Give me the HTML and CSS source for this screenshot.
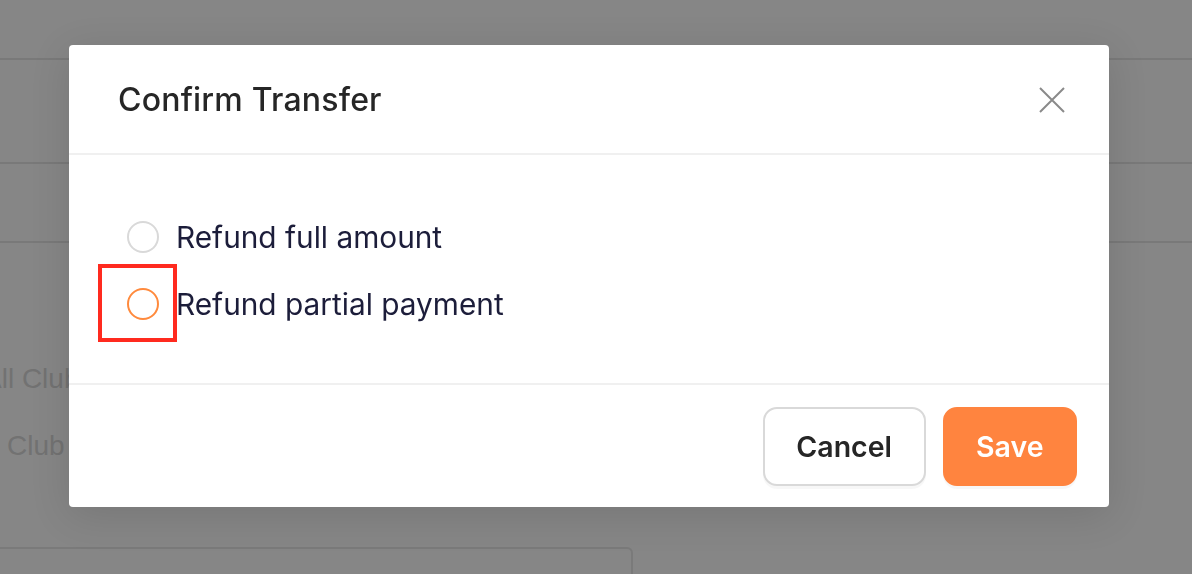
FILE: index.html
```html
<!DOCTYPE html>
<html lang="en">
<head>
    <meta charset="UTF-8">
    <meta name="viewport" content="width=device-width, initial-scale=1.0">
    <title>Confirm Transfer</title>
    <link rel="stylesheet" href="styles.css">
</head>
<body>
    <div class="page">
        <div class="page-row first"></div>
        <div class="page-row second"></div>
        <div class="page-row third"></div>
        <div class="club-list">
            <div class="club-item all">All Clubs</div>
            <div class="club-item mine">My Club</div>
        </div>
        <div class="page-box"></div>
    </div>

    <div class="overlay">
        <div class="modal">
            <div class="modal-header">
                <h2 class="modal-title">Confirm Transfer</h2>
                <button class="close-btn" aria-label="Close">
                    <svg width="26" height="26" viewBox="0 0 26 26">
                        <path d="M1 1 L25 25 M25 1 L1 25" stroke="#8a8a8a" stroke-width="2" fill="none"/>
                    </svg>
                </button>
            </div>
            <div class="modal-body">
                <label class="option">
                    <span class="radio"></span>
                    <span>Refund full amount</span>
                </label>
                <label class="option">
                    <span class="radio active"></span>
                    <span>Refund partial payment</span>
                </label>
                <div class="highlight"></div>
            </div>
            <div class="modal-footer">
                <button class="btn btn-cancel">Cancel</button>
                <button class="btn btn-save">Save</button>
            </div>
        </div>
    </div>
</body>
</html>
```

FILE: styles.css
```css
body {
    margin: 0;
    font-family: Inter, "Noto Sans", sans-serif;
    background-color: #868686;
    overflow: hidden;
}
.page {
    height: 574px;
    overflow: hidden;
}
.page-row {
    border-bottom: 2px solid #797979;
}
.page-row.first {
    height: 58px;
}
.page-row.second {
    height: 102px;
}
.page-row.third {
    height: 77px;
}
.club-list {
    padding-top: 120px;
    font-family: "Liberation Sans", Arial, sans-serif;
    font-size: 28px;
    color: #727272;
    white-space: nowrap;
}
.club-item {
    height: 67px;
}
.club-item.all {
    margin-left: -17px;
}
.club-item.mine {
    margin-left: -38px;
}
.page-box {
    margin-top: 50px;
    margin-left: -20px;
    width: 649px;
    height: 60px;
    border: 2px solid #7a7a7a;
    border-radius: 6px;
}

/* modal por cima da pagina */
.overlay {
    position: fixed;
    top: 0;
    left: 0;
    right: 0;
    bottom: 0;
    padding: 45px 0 0 69px;
}
.modal {
    width: 1040px;
    height: 462px;
    background-color: #fff;
    border-radius: 4px;
    box-shadow: 0 8px 40px rgba(0, 0, 0, 0.12);
    display: flex;
    flex-direction: column;
}
.modal-header {
    height: 108px;
    border-bottom: 2px solid #f0f0f0;
    display: flex;
    align-items: center;
    justify-content: space-between;
    padding: 0 44px 0 49px;
}
.modal-title {
    margin: 0;
    font-size: 32px;
    font-weight: 500;
    color: #262626;
    letter-spacing: 0.2px;
}
.close-btn {
    background: none;
    border: none;
    padding: 0;
    width: 26px;
    height: 26px;
    cursor: pointer;
    margin-top: 2px;
}
.modal-body {
    position: relative;
    height: 230px;
    border-bottom: 2px solid #f0f0f0;
    padding: 64px 0 0 58px;
    box-sizing: border-box;
    display: flex;
    flex-direction: column;
    gap: 31px;
}
.option {
    display: flex;
    align-items: center;
    gap: 17px;
    font-size: 29.8px;
    color: #1c1d3a;
    height: 36px;
}
.radio {
    width: 32px;
    height: 32px;
    box-sizing: border-box;
    border: 2px solid #d9d9d9;
    border-radius: 50%;
}
.radio.active {
    border-color: #ff8a3d;
}
.highlight {
    position: absolute;
    left: 29px;
    top: 109px;
    width: 79px;
    height: 78px;
    box-sizing: border-box;
    border: 4px solid #ff2a1f;
}
.modal-footer {
    flex: 1;
    display: flex;
    justify-content: flex-end;
    align-items: center;
    gap: 17px;
    padding: 0 32px 0 0;
}
.btn {
    height: 79px;
    padding: 0 31.5px;
    font-family: Inter, "Noto Sans", sans-serif;
    font-size: 28.5px;
    font-weight: 600;
    border-radius: 14px;
    cursor: pointer;
    box-shadow: 0 3px 0 rgba(0, 0, 0, 0.03);
}
.btn-cancel {
    background-color: #fff;
    border: 2px solid #d9d9d9;
    color: #262626;
}
.btn-save {
    background-color: #ff843f;
    border: 2px solid #ff843f;
    color: #fff;
}
```
